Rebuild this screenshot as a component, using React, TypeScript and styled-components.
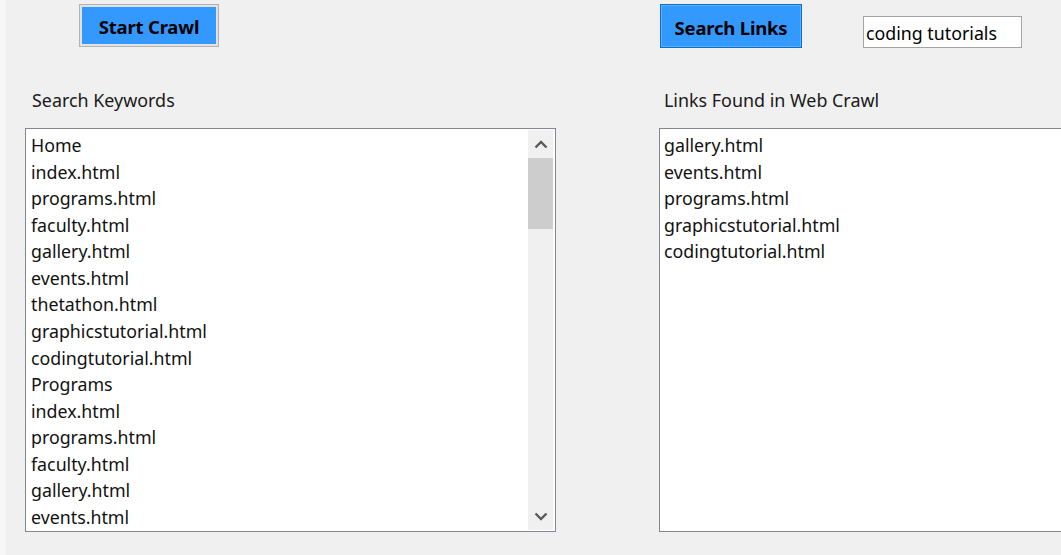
import React from "react";
import styled, { createGlobalStyle } from "styled-components";

const Global = createGlobalStyle`
  html, body { margin: 0; padding: 0; background: #f7f7f7; overflow: hidden; }
  #root { width: 1061px; height: 555px; }
`;

const FONT = `"Noto Sans", "Open Sans", sans-serif`;

const Frame = styled.div`
  width: 1061px;
  height: 555px;
  padding-left: 6px;
  box-sizing: border-box;
  background: #f7f7f7;
  overflow: hidden;
`;

const Window = styled.div`
  height: 555px;
  background: #f0f0f0;
  padding-left: 19px;
  padding-top: 4px;
  box-sizing: border-box;
  display: grid;
  grid-template-columns: 531px 420px;
  column-gap: 103px;
  font-family: ${FONT};
  color: #000;
`;

const Column = styled.div`
  display: flex;
  flex-direction: column;
`;

const TopRow = styled.div<{ $indent: number }>`
  display: flex;
  align-items: flex-start;
  height: 44px;
  padding-left: ${(p) => p.$indent}px;
`;

const Button = styled.button<{ $focused?: boolean; $w: number; $h: number }>`
  width: ${(p) => p.$w}px;
  height: ${(p) => p.$h}px;
  background: #3399ff;
  border: 1px solid ${(p) => (p.$focused ? "#0a6fd0" : "#b2b2b2")};
  box-shadow: inset 0 0 0 ${(p) => (p.$focused ? "1px #5eb0ff" : "2px #e2e2e2")};
  font-family: ${FONT};
  font-weight: 700;
  font-size: 18.5px;
  color: #000;
  padding: 2px 0 0 0;
  margin: 0;
  cursor: pointer;
  letter-spacing: -0.2px;
`;

const TextBox = styled.input`
  margin-left: 61px;
  margin-top: 12px;
  width: 159px;
  height: 32px;
  box-sizing: border-box;
  border: 1px solid #a3a3a3;
  background: #fff;
  font-family: ${FONT};
  font-size: 17.8px;
  padding: 2px 0 0 2px;
  outline: none;
  color: #000;
`;

const Label = styled.div<{ $indent: number }>`
  margin-top: 40px;
  padding-left: ${(p) => p.$indent}px;
  font-size: 17.9px;
  line-height: 24px;
  height: 40px;
  color: #1a1a1a;
`;

const ListBox = styled.div<{ $w: number }>`
  width: ${(p) => p.$w}px;
  height: 404px;
  box-sizing: border-box;
  border: 1px solid #828790;
  background: #fff;
  display: flex;
  overflow: hidden;
`;

const Items = styled.div<{ $indent: number }>`
  flex: 1;
  padding: 3px 0 0 ${(p) => p.$indent}px;
  min-width: 0;
`;

const Item = styled.div`
  font-size: 17.8px;
  line-height: 26.57px;
  height: 26.57px;
  white-space: nowrap;
  color: #111;
`;

const ScrollBar = styled.div`
  width: 25px;
  margin: 1px 2px 1px 0;
  background: #f0f0f0;
  display: flex;
  flex-direction: column;
`;

const ArrowBox = styled.div`
  height: 28px;
  display: flex;
  align-items: center;
  justify-content: center;
`;

const Track = styled.div`
  flex: 1;
`;

const Thumb = styled.div`
  height: 71px;
  background: #cdcdcd;
`;

const Chevron = ({ up }: { up?: boolean }) => (
  <svg width="14" height="9" viewBox="0 0 14 9">
    <path
      d={up ? "M1.5 7.5 L7 2 L12.5 7.5" : "M1.5 1.5 L7 7 L12.5 1.5"}
      fill="none"
      stroke="#5a5a5a"
      strokeWidth="2.4"
    />
  </svg>
);

const keywords = [
  "Home",
  "index.html",
  "programs.html",
  "faculty.html",
  "gallery.html",
  "events.html",
  "thetathon.html",
  "graphicstutorial.html",
  "codingtutorial.html",
  "Programs",
  "index.html",
  "programs.html",
  "faculty.html",
  "gallery.html",
  "events.html",
];

const links = [
  "gallery.html",
  "events.html",
  "programs.html",
  "graphicstutorial.html",
  "codingtutorial.html",
];

export default function App() {
  return (
    <>
      <Global />
      <Frame>
        <Window>
          <Column>
            <TopRow $indent={54}>
              <Button $w={140} $h={43}>Start Crawl</Button>
            </TopRow>
            <Label $indent={7}>Search Keywords</Label>
            <ListBox $w={531}>
              <Items $indent={5}>
                {keywords.map((k, i) => (
                  <Item key={i}>{k}</Item>
                ))}
              </Items>
              <ScrollBar>
                <ArrowBox>
                  <Chevron up />
                </ArrowBox>
                <Thumb />
                <Track />
                <ArrowBox>
                  <Chevron />
                </ArrowBox>
              </ScrollBar>
            </ListBox>
          </Column>
          <Column>
            <TopRow $indent={1}>
              <Button $focused $w={142} $h={44}>Search Links</Button>
              <TextBox defaultValue="coding tutorials" />
            </TopRow>
            <Label $indent={5}>Links Found in Web Crawl</Label>
            <ListBox $w={420}>
              <Items $indent={4}>
                {links.map((k, i) => (
                  <Item key={i}>{k}</Item>
                ))}
              </Items>
            </ListBox>
          </Column>
        </Window>
      </Frame>
    </>
  );
}
